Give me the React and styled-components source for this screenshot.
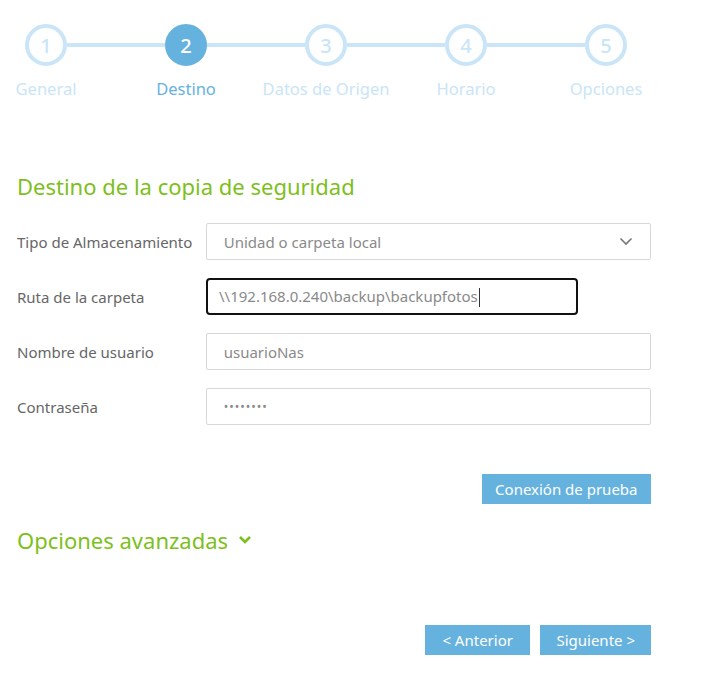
import React from "react";
import styled, { createGlobalStyle } from "styled-components";

const Global = createGlobalStyle`
  html, body { margin: 0; padding: 0; background: #fff; }
  body { font-family: "Noto Sans", "Open Sans", sans-serif; }
  * { box-sizing: border-box; }
`;

const BLUE = "#66b2de";
const PALE = "#c9e5f7";
const GREEN = "#7dbf1c";

const Page = styled.div`
  width: 708px;
  height: 684px;
  padding: 24px 57px 0 17px;
`;

const Stepper = styled.div`
  display: flex;
  align-items: flex-start;
  padding-left: 8px;
`;

const Step = styled.div`
  width: 42px;
  display: flex;
  flex-direction: column;
  align-items: center;
`;

const Circle = styled.div`
  width: 42px;
  height: 42px;
  border-radius: 50%;
  border: 4px solid ${(p) => (p.$active ? BLUE : PALE)};
  background: ${(p) => (p.$active ? BLUE : "#fff")};
  color: ${(p) => (p.$active ? "#fff" : PALE)};
  display: flex;
  align-items: center;
  justify-content: center;
  font-size: 20px;
  font-weight: 500;
`;

const StepLabel = styled.div`
  margin-top: 12px;
  white-space: nowrap;
  font-size: 16.5px;
  line-height: 22px;
  color: ${(p) => (p.$active ? BLUE : PALE)};
`;

const Connector = styled.div`
  width: 98px;
  height: 4px;
  margin-top: 19px;
  background: ${PALE};
`;

const Title = styled.h2`
  margin: 72px 0 23px;
  font-size: 22px;
  line-height: 28px;
  font-weight: 400;
  color: ${GREEN};
`;

const Form = styled.div`
  display: flex;
  flex-direction: column;
  gap: 18px;
`;

const Row = styled.div`
  display: flex;
  align-items: center;
`;

const Label = styled.div`
  width: 189px;
  font-size: 15px;
  color: #666;
`;

const Field = styled.div`
  width: ${(p) => p.$width || "446px"};
  height: 37px;
  display: flex;
  align-items: center;
  justify-content: space-between;
  padding: 0 ${(p) => (p.$focused ? "11px" : "17px")};
  border: ${(p) => (p.$focused ? "2px solid #111" : "1px solid #d8d8d8")};
  border-radius: ${(p) => (p.$focused ? "4px" : "2px")};
  font-size: 15px;
  color: #8a8a8a;
  background: #fff;
`;

const Caret = styled.span`
  display: inline-block;
  vertical-align: middle;
  width: 1px;
  height: 19px;
  background: #333;
  margin-left: 1px;
`;

const Dots = styled.span`
  letter-spacing: 1px;
  font-size: 12px;
`;

const Actions = styled.div`
  display: flex;
  justify-content: flex-end;
  gap: 10px;
  margin-top: ${(p) => p.$top};
`;

const Button = styled.button`
  border: none;
  background: ${BLUE};
  color: #fff;
  font-family: inherit;
  font-size: 15px;
  height: 30px;
  padding: 0 ${(p) => p.$pad || "14px"};
  cursor: pointer;
`;

const Advanced = styled.div`
  margin-top: 22px;
  display: flex;
  align-items: center;
  gap: 10px;
  font-size: 22px;
  line-height: 28px;
  color: ${GREEN};
`;

const steps = ["General", "Destino", "Datos de Origen", "Horario", "Opciones"];

export default function App() {
  return (
    <Page>
      <Global />
      <Stepper>
        {steps.map((s, i) => (
          <React.Fragment key={s}>
            {i > 0 && <Connector />}
            <Step>
              <Circle $active={i === 1}>{i + 1}</Circle>
              <StepLabel $active={i === 1}>{s}</StepLabel>
            </Step>
          </React.Fragment>
        ))}
      </Stepper>

      <Title>Destino de la copia de seguridad</Title>

      <Form>
        <Row>
          <Label>Tipo de Almacenamiento</Label>
          <Field>
            <span>Unidad o carpeta local</span>
            <svg width="14" height="9" viewBox="0 0 14 9">
              <path d="M1.5 1.5 L7 7 L12.5 1.5" fill="none" stroke="#777" strokeWidth="1.6" />
            </svg>
          </Field>
        </Row>
        <Row>
          <Label>Ruta de la carpeta</Label>
          <Field $focused $width="372px">
            <span>
              \\192.168.0.240\backup\backupfotos
              <Caret />
            </span>
          </Field>
        </Row>
        <Row>
          <Label>Nombre de usuario</Label>
          <Field>
            <span>usuarioNas</span>
          </Field>
        </Row>
        <Row>
          <Label>Contraseña</Label>
          <Field>
            <Dots>••••••••</Dots>
          </Field>
        </Row>
      </Form>

      <Actions $top="49px">
        <Button $pad="13.5px">Conexión de prueba</Button>
      </Actions>

      <Advanced>
        Opciones avanzadas
        <svg width="14" height="10" viewBox="0 0 14 10">
          <path d="M2 2 L7 7 L12 2" fill="none" stroke={GREEN} strokeWidth="2.6" />
        </svg>
      </Advanced>

      <Actions $top="71px">
        <Button $pad="17.5px">&lt; Anterior</Button>
        <Button $pad="16px">Siguiente &gt;</Button>
      </Actions>
    </Page>
  );
}
